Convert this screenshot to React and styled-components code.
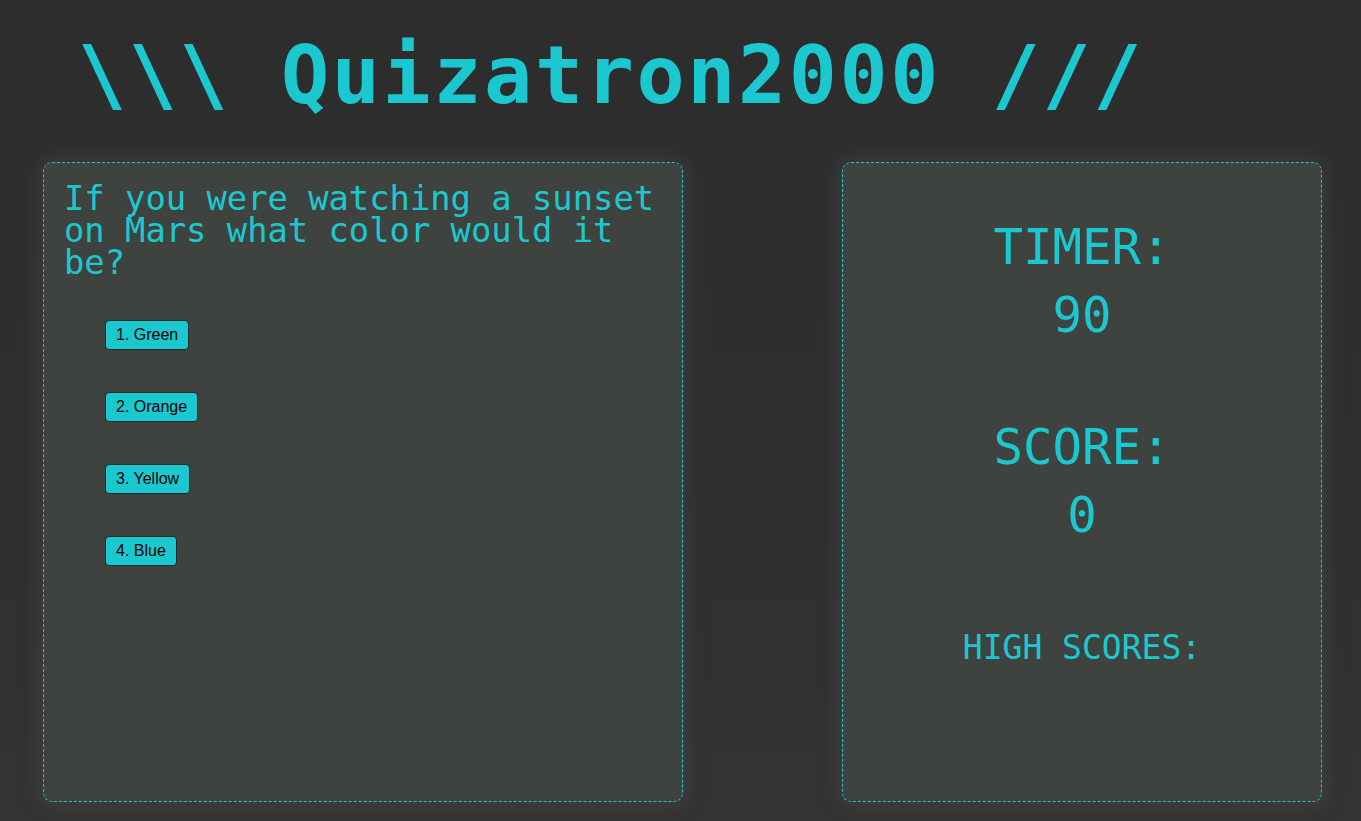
import React from "react";
import styled, { createGlobalStyle } from "styled-components";

const CYAN = "#1cc8cf";

const GlobalStyle = createGlobalStyle`
  html, body {
    margin: 0;
    padding: 0;
    background: #2e2e2e;
  }
  body {
    min-height: 821px;
    font-family: "DejaVu Sans Mono", "Liberation Mono", monospace;
  }
`;

const Page = styled.div`
  min-height: 821px;
  box-sizing: border-box;
  padding: 36px 0 0 43px;
  background: linear-gradient(180deg, #2d2d2d 0%, #2f2f2f 60%, #333 100%);
`;

const Title = styled.h1`
  margin: 0 0 46px 35px;
  font-family: "DejaVu Sans Mono", monospace;
  font-weight: bold;
  font-size: 80px;
  line-height: 80px;
  letter-spacing: 2.6px;
  color: ${CYAN};
  white-space: pre;
`;

const Row = styled.div`
  display: flex;
  gap: 159px;
  align-items: flex-start;
`;

const Panel = styled.section`
  box-sizing: border-box;
  width: ${(p) => p.$w}px;
  height: 640px;
  background: #3f4340;
  border: 1px dashed ${CYAN};
  border-radius: 9px;
  box-shadow: 0 0 18px 4px rgba(90, 90, 90, 0.35);
`;

const QuizPanel = styled(Panel)`
  padding: 20px 20px;
`;

const Question = styled.h2`
  margin: 0 0 41px;
  font-family: "DejaVu Sans Mono", monospace;
  font-weight: normal;
  font-size: 33.8px;
  line-height: 32px;
  color: ${CYAN};
`;

const Choices = styled.ol`
  list-style: none;
  margin: 0;
  padding: 0 0 0 41px;
  display: flex;
  flex-direction: column;
  align-items: flex-start;
  gap: 42px;
`;

const Choice = styled.button`
  height: 30px;
  box-sizing: border-box;
  padding: 0 10px;
  background: ${CYAN};
  color: #000;
  border: 1px solid #1c2a2a;
  border-radius: 4px;
  font-family: "Liberation Sans", Arial, sans-serif;
  font-size: 16px;
  cursor: pointer;
`;

const StatsPanel = styled(Panel)`
  display: flex;
  flex-direction: column;
  align-items: center;
  padding-top: 51px;
`;

const Stat = styled.div`
  display: flex;
  flex-direction: column;
  align-items: center;
  margin-bottom: ${(p) => p.$mb || 0}px;
`;

const StatLine = styled.div`
  font-size: 49px;
  line-height: 68px;
  color: ${CYAN};
  text-align: center;
`;

const HighScores = styled.div`
  font-size: 33px;
  line-height: 40px;
  color: ${CYAN};
  text-align: center;
`;

const choices = ["1. Green", "2. Orange", "3. Yellow", "4. Blue"];

export default function App() {
  return (
    <>
      <GlobalStyle />
      <Page>
        <Title>{"\\\\\\ Quizatron2000 ///"}</Title>
        <Row>
          <QuizPanel $w={640}>
            <Question>
              If you were watching a sunset on Mars what color would it be?
            </Question>
            <Choices>
              {choices.map((c) => (
                <li key={c}>
                  <Choice>{c}</Choice>
                </li>
              ))}
            </Choices>
          </QuizPanel>
          <StatsPanel $w={480}>
            <Stat $mb={64}>
              <StatLine>TIMER:</StatLine>
              <StatLine>90</StatLine>
            </Stat>
            <Stat $mb={78}>
              <StatLine>SCORE:</StatLine>
              <StatLine>0</StatLine>
            </Stat>
            <HighScores>HIGH SCORES:</HighScores>
          </StatsPanel>
        </Row>
      </Page>
    </>
  );
}
